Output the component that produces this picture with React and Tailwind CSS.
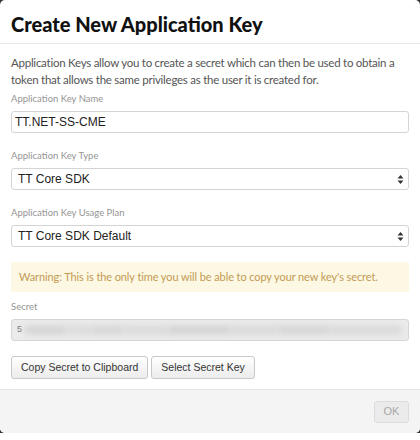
import React from "react";

const avenir = { fontFamily: "Lato, 'Open Sans', sans-serif" };
const helv = { fontFamily: "'Liberation Sans', Arial, sans-serif" };

// up/down caret shown at the right end of the native selects
const SelectArrows = () => (
  <svg width="7" height="11" viewBox="0 0 7 11" className="shrink-0">
    <path d="M3.5 1 L6.5 4.5 L0.5 4.5 Z" fill="#333" />
    <path d="M3.5 10 L6.5 6.5 L0.5 6.5 Z" fill="#333" />
  </svg>
);

const Label = ({ children }) => (
  <div className="text-[9.5px] leading-[14px] text-[#959595] mb-[5px]" style={avenir}>
    {children}
  </div>
);

const SelectBox = ({ value }) => (
  <div
    className="h-[22px] flex items-center justify-between pl-[6px] pr-[4px] border border-[#d4d4d4] rounded-[3px] bg-white text-[12px] text-[#222]"
    style={helv}
  >
    <span>{value}</span>
    <SelectArrows />
  </div>
);

// hidden key: smeared segments instead of readable characters
const secretSegments = [
  { w: 40, c: "#d2d2d2" },
  { w: 24, c: "#dadada" },
  { w: 32, c: "#d4d4d4" },
  { w: 42, c: "#d9d9d9" },
  { w: 60, c: "#d1d1d1" },
  { w: 46, c: "#d7d7d7" },
  { w: 50, c: "#d3d3d3" },
  { w: 70, c: "#d8d8d8" },
];

const btn =
  "h-[23px] px-[9px] border border-[#c8c8c8] rounded-[3px] bg-gradient-to-b from-white to-[#ececec] text-[10.5px] text-[#333]";

export default function App() {
  return (
    <div className="w-[420px] h-[440px] bg-white">
      <div className="h-[433px] bg-[#333]">
        <div className="h-full bg-white rounded-[5px] overflow-hidden flex flex-col">
          <div className="h-[44px] border-b border-[#e8e8e8] px-[11px] flex items-center pt-[4px]">
            <h1 className="text-[20px] font-black text-[#111]" style={avenir}>
              Create New Application Key
            </h1>
          </div>

          <div className="flex-1 px-[11px] pt-[10px]">
            <p className="text-[11.5px] leading-[17px] text-[#555] tracking-[-0.25px] mb-[4px]" style={avenir}>
              Application Keys allow you to create a secret which can then be used to obtain a token that allows the same privileges as the user it is created for.
            </p>

            <Label>Application Key Name</Label>
            <div
              className="h-[22px] flex items-center px-[3px] border border-[#d4d4d4] rounded-[3px] text-[12px] text-[#222]"
              style={helv}
            >
              TT.NET-SS-CME
            </div>

            <div className="mt-[16px]">
              <Label>Application Key Type</Label>
              <SelectBox value="TT Core SDK" />
            </div>

            <div className="mt-[16px]">
              <Label>Application Key Usage Plan</Label>
              <SelectBox value="TT Core SDK Default" />
            </div>

            <div
              className="mt-[15px] h-[30px] flex items-center px-[8px] bg-[#fcf8e3] text-[#c49a55] text-[11px] tracking-[-0.1px]"
              style={avenir}
            >
              Warning: This is the only time you will be able to copy your new key's secret.
            </div>

            <div className="mt-[8px]">
              <Label>Secret</Label>
              <div className="h-[22px] flex items-center pl-[5px] pr-[6px] border border-[#d6d6d6] rounded-[3px] bg-[#ebebeb] gap-[3px]">
                <span className="text-[9px] text-[#777] blur-[0.4px]" style={helv}>5</span>
                <div className="flex-1 flex items-center">
                  {secretSegments.map((s, i) => (
                    <div
                      key={i}
                      className="h-[8px] blur-[3px]"
                      style={{ flexGrow: s.w, backgroundColor: s.c }}
                    />
                  ))}
                </div>
              </div>
            </div>

            <div className="mt-[15px] flex gap-[3px]">
              <button className={btn} style={helv}>
                Copy Secret to Clipboard
              </button>
              <button className={btn} style={helv}>
                Select Secret Key
              </button>
            </div>
          </div>

          <div className="h-[44px] border-t border-[#e5e5e5] bg-[#f4f4f4] flex items-center justify-end px-[11px]">
            <button
              className="h-[22px] w-[35px] border border-[#dcdcdc] rounded-[3px] bg-[#ebebeb] text-[11px] text-[#a8a8a8]"
              style={helv}
            >
              OK
            </button>
          </div>
        </div>
      </div>
    </div>
  );
}
